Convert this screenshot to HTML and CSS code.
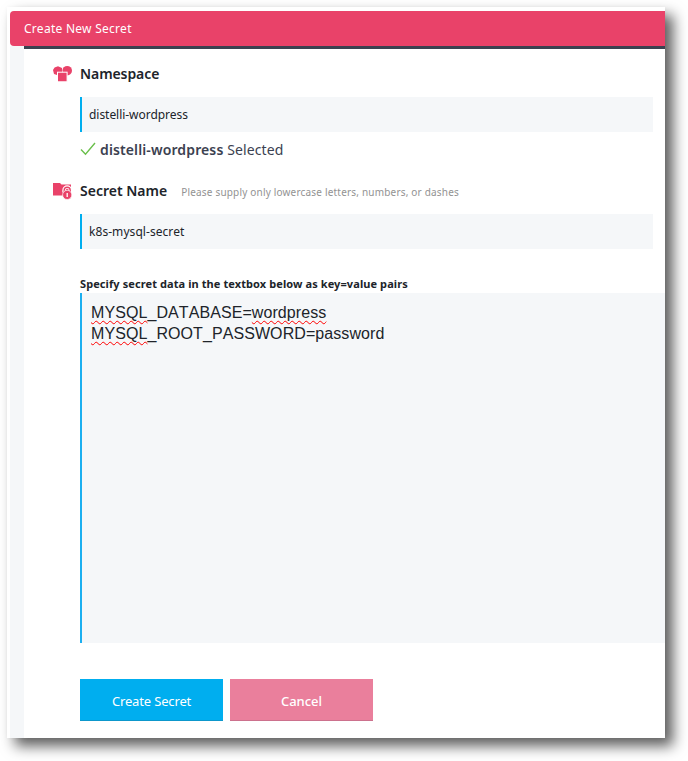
FILE: index.html
```html
<!DOCTYPE html>
<html lang="en">
<head>
<meta charset="utf-8">
<title>Create New Secret</title>
<link rel="stylesheet" href="styles.css">
</head>
<body>
<main class="window">
  <header class="title-bar">Create New Secret</header>
  <div class="shell">
    <form class="panel">
      <section class="group namespace">
        <div class="heading">
          <svg class="icon" width="19" height="18" viewBox="0 0 19 18">
            <path d="M5 1.2 9 3V10H4L1 9 0 5 1.6 2.4Z"/>
            <circle cx="14.2" cy="5.7" r="4.8"/>
            <rect class="cutout" x="4.5" y="7.2" width="9.6" height="9.6"/>
          </svg>
          <h2>Namespace</h2>
        </div>
        <div class="field">distelli-wordpress</div>
        <div class="selected">
          <svg class="check" width="16" height="14" viewBox="0 0 16 14"><path d="M1 7.5 5.5 12.2 15 1"/></svg>
          <span><b>distelli-wordpress</b> Selected</span>
        </div>
      </section>
      <section class="group secret">
        <div class="heading">
          <svg class="icon" width="19" height="18" viewBox="0 0 19 18">
            <path d="M0 1H7L8.5 2.6H18V13.6H0Z"/>
            <path class="halo" d="M11 10.5V8.2a3.2 3.2 0 0 1 6.4 0v2.3"/>
            <path class="shackle" d="M11.2 10.5V8.2a3 3 0 0 1 6 0v2.3"/>
            <circle class="lock" cx="14.2" cy="12.9" r="4.6"/>
            <path class="keyhole" d="M14.2 11V15"/>
          </svg>
          <h2>Secret Name</h2>
          <span class="hint">Please supply only lowercase letters, numbers, or dashes</span>
        </div>
        <div class="field">k8s-mysql-secret</div>
      </section>
      <div class="label">Specify secret data in the textbox below as key=value pairs</div>
      <div class="editor">
        <div><span class="typo">MYSQL</span>_DATABASE=<span class="typo">wordpress</span></div>
        <div><span class="typo">MYSQL</span>_ROOT_PASSWORD=password</div>
      </div>
      <div class="actions">
        <button type="button" class="create">Create Secret</button>
        <button type="button" class="cancel">Cancel</button>
      </div>
    </form>
  </div>
</main>
</body>
</html>
```
FILE: styles.css
```css
* { box-sizing: border-box; }
body {
  margin: 0;
  height: 761px;
  overflow: hidden;
  background: #fff;
  font-family: "Noto Sans", "Open Sans", sans-serif;
  color: #20242a;
}
.window {
  margin: 7px 0 0 7px;
  width: 658px;
  height: 731px;
  padding: 4px 0 0 3px;
  background: #fff;
  box-shadow: 8px 8px 13px rgba(0, 0, 0, .64), 0 0 4px rgba(0, 0, 0, .03);
  display: flow-root;
}
.title-bar {
  height: 35px;
  padding-left: 14px;
  border-radius: 4px 0 0 4px;
  background: #e94269;
  color: #fff;
  font-size: 12px;
  line-height: 35px;
  letter-spacing: .27px;
}
.shell {
  height: 692px;
  padding-left: 14px;
  background: #f5f7f9;
}
.panel {
  height: 100%;
  padding: 0 0 0 28px;
  border-top: 3px solid #3b4150;
  background: #fff;
}
.group { padding-right: 12px; }
.namespace { padding-top: 13px; }
.secret { padding-top: 15px; }
.heading { display: flex; align-items: center; height: 24px; }
.heading h2 { margin: 0; font-size: 14px; font-weight: 600; line-height: 24px; }
.namespace h2 { letter-spacing: -.08px; }
.icon { margin: 0 8px 0 1px; fill: #e94269; flex: none; }
.icon .cutout { stroke: #fff; stroke-width: 1; }
.icon .halo { fill: none; stroke: #fff; stroke-width: 3.4; }
.icon .shackle { fill: none; stroke: #e94269; stroke-width: 1.4; }
.icon .lock { stroke: #fff; stroke-width: .7; }
.icon .keyhole { stroke: #fff; stroke-width: 1.3; }
.hint { margin: 2px 0 0 14px; font-size: 10px; letter-spacing: .19px; color: #929292; }
.field {
  height: 35px;
  margin: 11px 0 0 28px;
  padding-left: 7px;
  border-left: 2px solid #00aeef;
  background: #f5f7f9;
  font-size: 12px;
  line-height: 35px;
}
.namespace .field { letter-spacing: -.04px; }
.secret .field { letter-spacing: .06px; }
.selected {
  display: flex;
  align-items: center;
  height: 30px;
  margin: 2px 0 0 28px;
  font-size: 14px;
  letter-spacing: .12px;
  color: #3b4150;
}
.selected b { font-weight: 600; }
.check { margin-right: 4px; fill: none; stroke: #6abf4b; stroke-width: 1.4; }
.label {
  height: 16px;
  margin: 28px 0 0 28px;
  font-size: 11px;
  font-weight: 700;
  line-height: 13px;
  letter-spacing: .09px;
}
.editor {
  height: 350px;
  margin-left: 28px;
  padding: 9px 9px;
  border-left: 2px solid #1caff0;
  background: #f5f7f9;
  font: 16px/21px "Liberation Sans", sans-serif;
  font-kerning: none;
  letter-spacing: .08px;
}
.typo {
  text-decoration: underline wavy #f00 1.2px;
  text-decoration-skip-ink: none;
  text-underline-offset: 2px;
}
.actions { display: flex; gap: 7px; margin: 36px 0 0 28px; }
.actions button {
  width: 143px;
  height: 42px;
  padding: 3px 0 0;
  border: 0;
  border-bottom: 1px solid #0d97cb;
  border-radius: 0;
  background: #00aeef;
  color: #fff;
  font: 13px "Noto Sans", sans-serif;
}
.actions .create { letter-spacing: -.15px; }
.actions .cancel { background: #ea7f9c; border-color: #cc718d; font-weight: 500; }
```
